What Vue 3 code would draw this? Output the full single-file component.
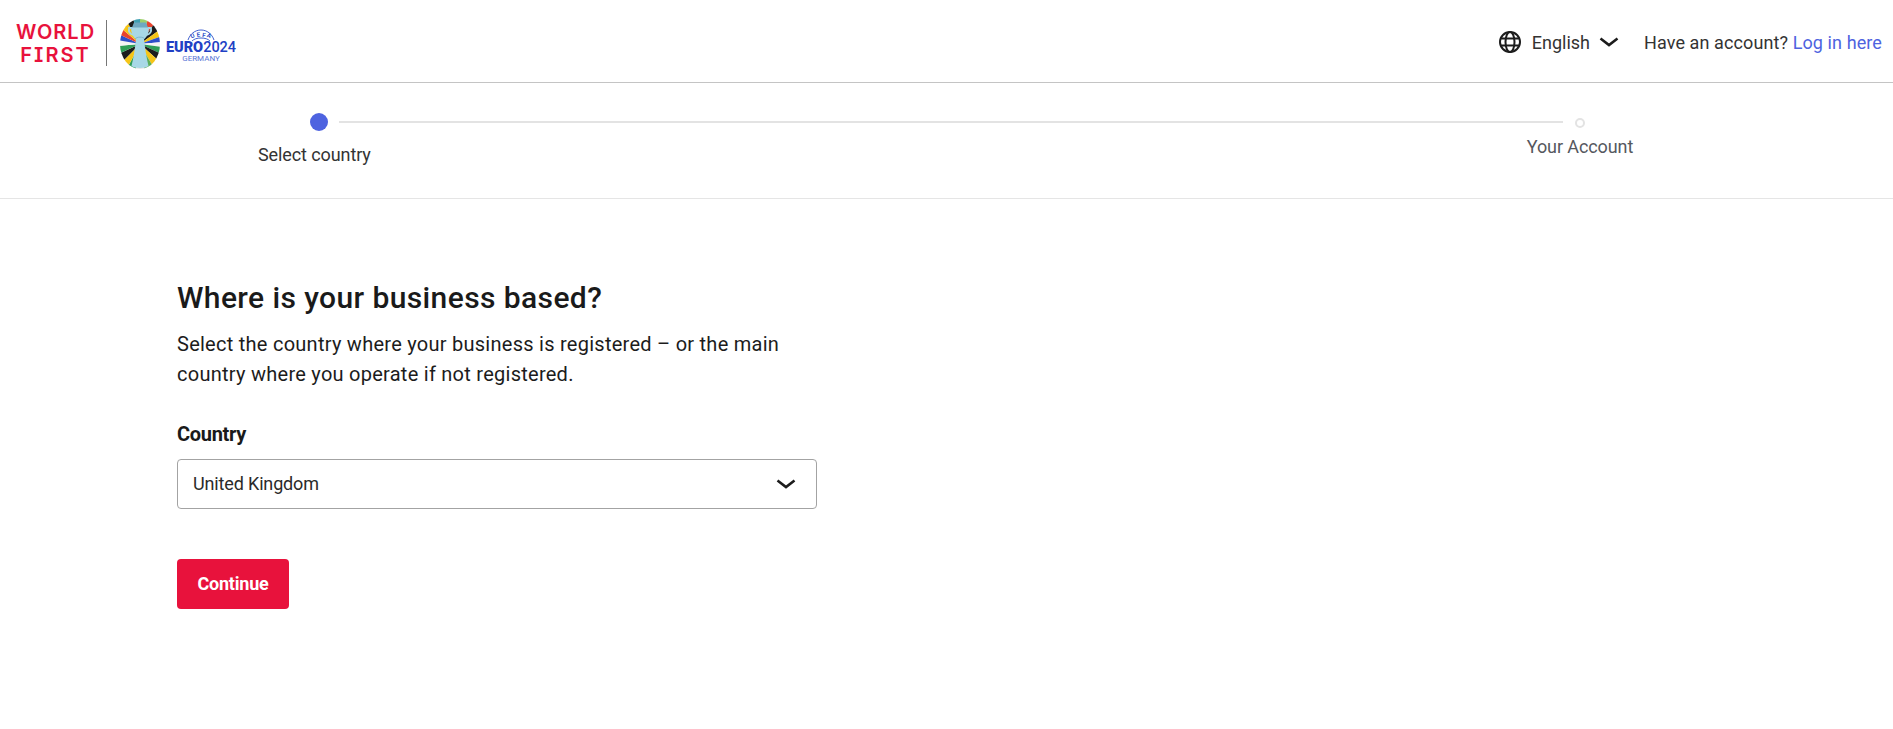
<script setup>
const cx = 20, cy = 25
const wedges = [
  ['#9ccf6a', -90, -72], ['#e8432e', -72, -55], ['#1c1c1c', -55, -36], ['#f5c518', -36, -20], ['#2d4fc9', -20, -5],
  ['#f4f4f4', -5, 8], ['#2f9e57', 8, 25], ['#1c1c1c', 25, 42], ['#f5c518', 42, 60], ['#5dae5a', 60, 80], ['#e8e8e8', 80, 100],
  ['#2f9e57', 100, 118], ['#f5c518', 118, 135], ['#1c1c1c', 135, 155], ['#2f9e57', 155, 175],
  ['#f4f4f4', 175, 190], ['#2d4fc9', 190, 205], ['#e8432e', 205, 220], ['#f5c518', 220, 240], ['#1c1c1c', 240, 255], ['#3e9fb0', 255, 270]
]
function wedge(a, b) {
  const r = (d) => (d * Math.PI) / 180
  const p = (d) => `${(cx + 40 * Math.cos(r(d))).toFixed(2)} ${(cy + 40 * Math.sin(r(d))).toFixed(2)}`
  return `M${cx} ${cy}L${p(a)}L${p(b)}Z`
}
</script>

<template>
  <div class="page">
    <header class="topbar">
      <div class="brand">
        <div class="wordmark"><span>WORLD</span><span class="first">FIRST</span></div>
        <div class="divider"></div>
        <svg class="trophy" width="40" height="50" viewBox="0 0 40 50">
          <defs>
            <clipPath id="oval"><ellipse cx="20" cy="25" rx="20" ry="25" /></clipPath>
          </defs>
          <g clip-path="url(#oval)">
            <path v-for="(w, i) in wedges" :key="i" :d="wedge(w[1], w[2])" :fill="w[0]" />
          </g>
          <path d="M11 8h18c0 6-2 10-5 12c1 9 2.500 19 4.500 27c-2 2.500-15 2.500-17 0c2-8 3.500-18 4.500-27c-3-2-5-6-5-12z" fill="#a8d8e6" />
          <path d="M14 3.500h12l2 5h-16z" fill="#6fa8c0" />
          <path d="M11 9h-2c-.5 3 1 6 4 7M29 9h2c.5 3-1 6-4 7" fill="none" stroke="#a8d8e6" stroke-width="1.800" />
          <path d="M15 20c2-2.500 8-2.500 10 0" fill="none" stroke="#7fb4cc" stroke-width="1" />
        </svg>
        <div class="euro">
          <svg class="uefa" width="28" height="13" viewBox="0 0 28 13">
            <path d="M1 11C3 5 8 1 14 1S25 5 27 11" fill="none" stroke="#2d4fc9" stroke-width="0.900" />
            <path d="M5 12C7 10 10 9 14 9s7 1 9 3" fill="none" stroke="#2d4fc9" stroke-width="0.900" />
            <text x="4.500" y="9.500" transform="rotate(-24 4.500 9.500)">U</text>
            <text x="10" y="8" transform="rotate(-8 10 8)">E</text>
            <text x="15" y="8" transform="rotate(8 15 8)">F</text>
            <text x="19.500" y="7.500" transform="rotate(24 19.500 7.500)">A</text>
          </svg>
          <div class="euro-name"><b>EURO</b>2024</div>
          <div class="euro-place">GERMANY</div>
        </div>
      </div>
      <div class="top-actions">
        <svg class="globe" width="24" height="24" viewBox="0 0 24 24" fill="none" stroke="#1c1c1c" stroke-width="2">
          <circle cx="12" cy="12" r="10" />
          <ellipse cx="12" cy="12" rx="4.500" ry="10" />
          <path d="M2.800 8.500h18.400M2.800 15.500h18.400" />
        </svg>
        <span class="lang">English</span>
        <svg class="lang-chevron" width="20" height="12" viewBox="0 0 20 12" fill="none" stroke="#1c1c1c" stroke-width="2.600">
          <path d="M1.500 2.500l8.500 6.500l8.500-6.500" />
        </svg>
        <span class="account">Have an account? <a class="login">Log in here</a></span>
      </div>
    </header>

    <section class="stepper">
      <div class="step step-first">
        <span class="dot"></span>
        <span class="step-label">Select country</span>
      </div>
      <div class="track"></div>
      <div class="step step-last">
        <span class="ring"></span>
        <span class="step-label muted">Your Account</span>
      </div>
    </section>

    <main class="content">
      <h1>Where is your business based?</h1>
      <p>Select the country where your business is registered – or the main country where you operate if not registered.</p>
      <label class="field-label">Country</label>
      <div class="select">
        <span class="select-value">United Kingdom</span>
        <svg width="20" height="12" viewBox="0 0 20 12" fill="none" stroke="#1c1c1c" stroke-width="2.600">
          <path d="M1.500 2.500l8.500 6.500l8.500-6.500" />
        </svg>
      </div>
      <button class="continue">Continue</button>
    </main>
  </div>
</template>

<style>
html, body { margin: 0; background: #fff; }
</style>

<style scoped>
.page {
  font-family: Roboto, "Liberation Sans", sans-serif;
  color: #1c1c1c;
  min-height: 729px;
  background: #fff;
}
.topbar {
  height: 82px;
  border-bottom: 1px solid #c4c4c4;
  display: flex;
  align-items: center;
  justify-content: space-between;
  padding: 0 11px 0 17px;
}
.brand { display: flex; align-items: center; padding-top: 5px; }
.wordmark {
  display: flex;
  flex-direction: column;
  align-items: center;
  font-family: Inter, sans-serif;
  font-weight: 600;
  font-size: 20px;
  line-height: 23px;
  letter-spacing: 1px;
  font-feature-settings: "cv08";
  color: #e8123c;
  width: 77px;
  margin-top: 0;
}
.first { letter-spacing: 2px; }
.divider { width: 1px; height: 46px; background: #777; margin: -2px 13px 0 12px; }
.trophy { flex: none; }
.euro {
  margin: 5px 0 0 7px;
  width: 68px;
  display: flex;
  flex-direction: column;
  align-items: center;
  color: #2140c4;
}
.uefa { margin-bottom: -1px; }
.uefa text { font: 700 6px Roboto, sans-serif; fill: #2d4fc9; }
.euro-name { font-size: 14.500px; line-height: 13px; font-weight: 500; white-space: nowrap; }
.euro-name b { font-weight: 900; }
.euro-place { font-size: 8px; line-height: 9px; color: #5b77d6; }
.top-actions { display: flex; align-items: center; padding-top: 2px; }
.globe { margin-right: 10px; }
.lang { font-size: 18px; color: #333; margin-right: 9px; }
.lang-chevron { margin-right: 25px; }
.account { font-size: 18px; color: #333; letter-spacing: 0.100px; }
.login { color: #4e63e0; }
.stepper {
  height: 116px;
  box-sizing: border-box;
  border-bottom: 1px solid #e5e5e5;
  display: flex;
  align-items: flex-start;
  padding: 30px 0 0 258px;
}
.step { display: flex; flex-direction: column; }
.step-first { width: 112px; }
.step-last { width: 106px; margin-top: 5px; margin-left: 1px; align-items: center; }
.dot { width: 18px; height: 18px; border-radius: 50%; background: #4e63e0; margin-left: 52px; }
.ring { width: 10px; height: 10px; box-sizing: border-box; border-radius: 50%; border: 2px solid #e3e3e3; background: #fff; }
.track { flex: none; width: 1224px; height: 2px; background: #e3e3e3; margin: 8px -37px 0 -31px; }
.step-label { font-size: 18px; line-height: 20px; white-space: nowrap; letter-spacing: -0.100px; }
.step-first .step-label { margin-top: 14px; color: #333; }
.step-last .step-label { margin-top: 9px; }
.muted { color: #55585e; }
.content { width: 641px; padding: 81px 0 0 177px; }
h1 { margin: 0; font-size: 30px; line-height: 36px; font-weight: 500; color: #1a1a1a; letter-spacing: 0.400px; }
p { margin: 13px 0 0; font-size: 20px; line-height: 30px; color: #1c1c1c; letter-spacing: 0.260px; }
.field-label { display: block; margin-top: 32px; font-size: 20px; line-height: 26px; font-weight: 700; letter-spacing: -0.300px; color: #1a1a1a; }
.select {
  margin-top: 12px;
  height: 50px;
  box-sizing: border-box;
  border: 1px solid #a3a3a3;
  border-radius: 4px;
  display: flex;
  align-items: center;
  justify-content: space-between;
  padding: 0 20px 0 15px;
  font-size: 18px;
  letter-spacing: -0.150px;
  color: #2a2a2a;
  width: 640px;
}
.select-value { margin-top: -2px; }
.continue {
  display: block;
  margin-top: 50px;
  padding: 0 0 2px;
  width: 112px;
  height: 50px;
  border: 0;
  border-radius: 4px;
  background: #e8123c;
  color: #fff;
  font: 700 18px Roboto, sans-serif;
  letter-spacing: -0.200px;
}
</style>
